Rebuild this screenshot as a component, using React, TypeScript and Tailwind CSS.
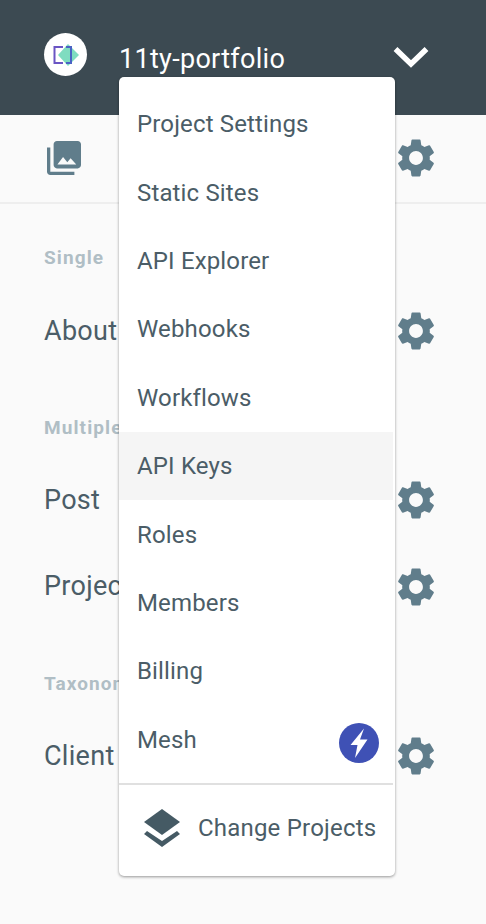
const menuItems = [
  "Project Settings",
  "Static Sites",
  "API Explorer",
  "Webhooks",
  "Workflows",
  "API Keys",
  "Roles",
  "Members",
  "Billing",
];

function Gear() {
  return (
    <svg viewBox="0 0 24 24" className="h-[46px] w-[46px] fill-[#607d8b]">
      <path d="M19.14 12.94c.04-.3.06-.61.06-.94 0-.32-.02-.64-.07-.94l2.03-1.58a.49.49 0 0 0 .12-.61l-1.92-3.32a.488.488 0 0 0-.59-.22l-2.39.96c-.5-.38-1.03-.7-1.62-.94l-.36-2.54a.484.484 0 0 0-.48-.41h-3.84c-.24 0-.43.17-.47.41l-.36 2.54c-.59.24-1.13.57-1.62.94l-2.39-.96c-.22-.08-.47 0-.59.22L2.74 8.87c-.12.21-.08.47.12.61l2.03 1.58c-.05.3-.09.63-.09.94s.02.64.07.94l-2.03 1.58a.49.49 0 0 0-.12.61l1.92 3.32c.12.22.37.29.59.22l2.39-.96c.5.38 1.03.7 1.62.94l.36 2.54c.05.24.24.41.48.41h3.84c.24 0 .44-.17.47-.41l.36-2.54c.59-.24 1.13-.56 1.62-.94l2.39.96c.22.08.47 0 .59-.22l1.92-3.32c.12-.22.07-.47-.12-.61l-2.01-1.58zM12 15.6c-1.98 0-3.6-1.62-3.6-3.6s1.62-3.6 3.6-3.6 3.6 1.62 3.6 3.6-1.62 3.6-3.6 3.6z" />
    </svg>
  );
}

function SectionLabel({ children }: { children: string }) {
  return (
    <div className="pl-11 text-[19px] leading-[22px] font-bold tracking-[1.1px] text-[#b0bec5]">
      {children}
    </div>
  );
}

function ContentRow({ label }: { label: string }) {
  return (
    <div className="flex h-[68px] items-center justify-between pr-[47px] pl-11 text-[27px] tracking-[0.3px] text-[#4b5d67]">
      <span>{label}</span>
      <Gear />
    </div>
  );
}

export default function App() {
  return (
    <div className="relative h-[924px] w-[486px] overflow-hidden bg-[#fafafa] font-['Roboto',sans-serif]">
      <header className="flex h-[115px] items-start bg-[#3c4a52] pt-[33px] pr-[57px] pl-11">
        <div className="flex h-[43px] w-[43px] items-center justify-center rounded-full bg-white">
          <svg viewBox="0 0 30 30" className="h-[30px] w-[30px]">
            <path d="M17 4 L28 15 L17 26 L7 15 Z" fill="#7fdcc0" />
            <path d="M12 7H3.500V23H12" fill="none" stroke="#6a55c4" strokeWidth="2" />
            <path d="M15 7H20V23H15" fill="none" stroke="#4a63c4" strokeWidth="2" />
          </svg>
        </div>
        <div className="ml-8 flex-1 pt-[7px] text-[27px] leading-[38px] tracking-[0.3px] text-white">11ty-portfolio</div>
        <svg viewBox="0 0 36 24" className="mt-3 h-[24px] w-[36px] fill-none stroke-white stroke-[5.5]">
          <path d="M2.500 4 L18 19 L33.500 4" />
        </svg>
      </header>

      <div className="flex h-[89px] items-center justify-between border-b-2 border-[#eeeeee] pr-[47px] pb-[2px] pl-[47px]">
        <svg viewBox="0 0 36 36" className="h-[34px] w-[34px] fill-[#607d8b]">
          <path d="M3.500 7H0v25.500C0 34.400 1.600 36 3.500 36H29v-3.500H3.500z" />
          <path d="M32.500 0h-22C8.600 0 7 1.600 7 3.500v22C7 27.400 8.600 29 10.500 29h22c1.900 0 3.500-1.600 3.500-3.500v-22C36 1.600 34.400 0 32.500 0zM11 25l6-8 4.500 5.500 3.500-4.200L31 25z" />
        </svg>
        <Gear />
      </div>

      <div className="pt-[43px]">
        <SectionLabel>Single</SectionLabel>
        <div className="mt-[28px]">
          <ContentRow label="About" />
        </div>
        <div className="mt-[52px]">
          <SectionLabel>Multiple</SectionLabel>
        </div>
        <div className="mt-[27px]">
          <ContentRow label="Post" />
          <div className="mt-[18.5px]">
            <ContentRow label="Project" />
          </div>
        </div>
        <div className="mt-[52.5px]">
          <SectionLabel>Taxonomy</SectionLabel>
        </div>
        <div className="mt-[27px]">
          <ContentRow label="Client" />
        </div>
      </div>

      <div className="absolute top-[77px] left-[119px] w-[276px] rounded-[5px] bg-white pt-[13px] shadow-[0_1px_3px_rgba(0,0,0,0.4)]">
        {menuItems.map((item) => (
          <div
            key={item}
            className={`mr-[2px] flex h-[68.4px] items-center pl-[18px] text-[24px] tracking-[0.15px] text-[#4b5d67] ${item === "API Keys" ? "bg-[#f5f5f5]" : ""}`}
          >
            {item}
          </div>
        ))}
        <div className="mr-[2px] flex h-[68.4px] items-center justify-between pr-[14px] pl-[18px] text-[24px] tracking-[0.15px] text-[#4b5d67]">
          Mesh
          <svg viewBox="0 0 40 40" className="mt-[7px] h-10 w-10">
            <circle cx="20" cy="20" r="20" fill="#3f51b5" />
            <path d="M25 5.500 L11.500 22 H18.500 L16 35 L28.500 16.500 H21 Z" fill="white" />
          </svg>
        </div>
        <div className="mt-[9px] mr-[2px] h-[2px] bg-[#e0e0e0]" />
        <div className="mb-1 flex h-[87px] items-center gap-[18px] pl-[25px] text-[24px] tracking-[0.2px] text-[#4b5d67]">
          <svg viewBox="0 0 36 38" className="h-[38px] w-[36px] fill-[#455a64]">
            <path d="M18 0 L36 13 L18 26 L0 13 Z" />
            <path d="M18 32 L3 22 L0 25 L18 38 L36 25 L33 22 Z" />
          </svg>
          Change Projects
        </div>
      </div>
    </div>
  );
}
